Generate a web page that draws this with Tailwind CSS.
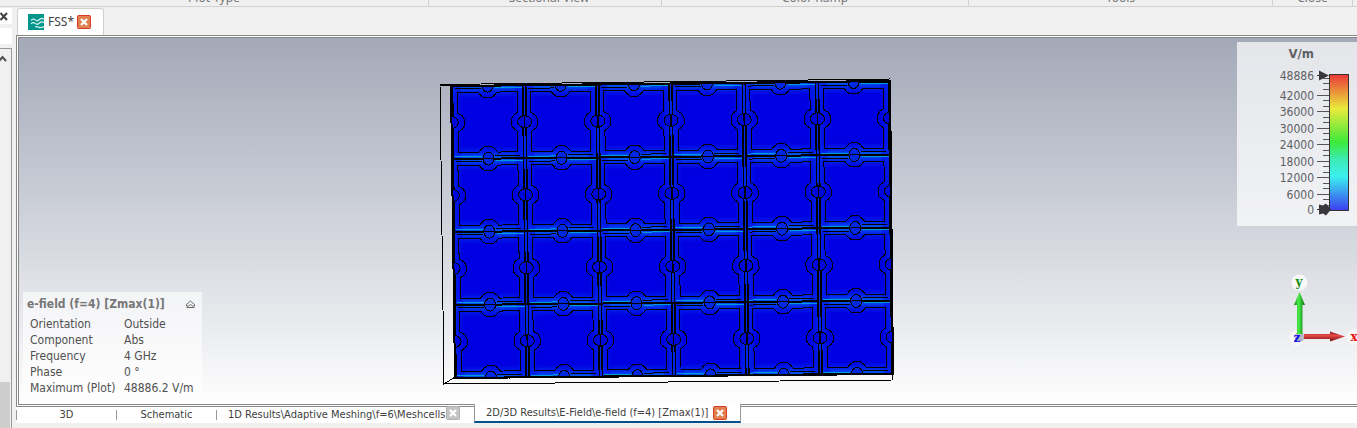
<!DOCTYPE html>
<html lang="en">
<head>
  <meta charset="UTF-8" />
  <meta name="viewport" content="width=device-width, initial-scale=1.0"/>
  <title>FSS - e-field</title>
  <script src="https://cdn.jsdelivr.net/npm/@tailwindcss/browser@4"></script>
</head>
<body class="h-screen overflow-hidden flex flex-col bg-[#f0f0f0] text-[#404040] font-['DejaVu_Sans_Condensed','Noto_Sans',sans-serif]">

  <!-- ribbon group captions -->
  <header class="h-[7px] shrink-0 relative overflow-hidden border-b border-[#d0d0d0] text-[12px] leading-[16px] text-[#777] font-['Noto_Sans',sans-serif]">
    <div class="absolute bottom-0 inset-x-0 flex text-center whitespace-nowrap">
      <span class="w-[429px] border-r border-[#d0d0d0]">Plot Type</span>
      <span class="w-[233px] pl-2 border-r border-[#d0d0d0]">Sectional View</span>
      <span class="w-[307px] border-r border-[#d0d0d0]">Color Ramp</span>
      <span class="w-[304px] border-r border-[#d0d0d0]">Tools</span>
      <span class="flex-1 mr-1 border-r border-[#d0d0d0]">Close</span>
    </div>
  </header>

  <div class="flex flex-1 min-h-0">
    <!-- docked pane on the left -->
    <aside class="w-3 mr-1 shrink-0 flex flex-col">
      <button aria-label="Close pane" class="mt-px h-4 bg-white">
        <svg class="w-3 h-4" viewBox="0 0 12 16"><path d="M0.500 5l6.500 7M7 5L0.500 12" stroke="#404040" stroke-width="2" fill="none"/></svg>
      </button>
      <div class="mt-1 h-4 bg-white"></div>
      <div class="mt-1 flex-1 flex flex-col justify-between border-t border-r border-[#999]">
        <svg class="w-[11px] h-4" viewBox="0 0 11 16"><path d="M-1 12l3.500-4 3.500 4" stroke="#505050" stroke-width="2" fill="none"/></svg>
        <div class="w-[10px] h-[46px] bg-[#cdcdcd]"></div>
      </div>
    </aside>

    <main class="flex-1 min-w-0 flex flex-col">
      <!-- document tab -->
      <div class="h-7 pt-px flex">
        <div class="h-[27px] pl-[10px] pr-3 ml-px flex items-center bg-white border border-b-0 border-[#d0d0d0] rounded-t-[3px] font-['Noto_Sans',sans-serif]">
          <svg class="w-4 h-4 mr-1" viewBox="0 0 16 16">
            <rect width="16" height="16" fill="#00968c"/>
            <path d="M3 6.500q2-2.500 4.200-.6t4.300-.4 4.500-.2M3 10q2-2.500 4.200-.6t4.300-.4 4.500-.2M7 13q1.500-1 3.500.1t5.500-.6" stroke="#d8f2f0" stroke-width="1.200" fill="none"/>
          </svg>
          <span class="text-[12px] leading-4 mr-[3px]">FSS*</span>
          <button aria-label="Close FSS">
            <svg class="w-[14px] h-[14px] block" viewBox="0 0 14 14"><rect x=".5" y=".5" width="13" height="13" rx="1" fill="#e08050" stroke="#d93a22"/><path d="M4 4l6 6M10 4l-6 6" stroke="#fff" stroke-width="2.200"/></svg>
          </button>
        </div>
      </div>

      <!-- 3D view -->
      <section class="h-[372px] shrink-0 border border-r-0 border-[#888] bg-white pl-px py-px">
        <div class="relative h-full border border-r-0 border-[#888] bg-linear-to-b from-[#a3a9b8] to-[#fefefe] overflow-hidden">
          <svg class="absolute left-[419px] top-[38px]" width="458" height="310" viewBox="438 76 458 310" shape-rendering="crispEdges">
            <defs>
              <linearGradient id="edgeV" x1="0" y1="0" x2="0" y2="1">
                <stop offset="0" stop-color="#0060f0"/><stop offset=".08" stop-color="#0020e8"/><stop offset=".17" stop-color="#0000e2"/>
                <stop offset=".83" stop-color="#0000e2"/><stop offset=".92" stop-color="#0020e8"/><stop offset="1" stop-color="#0060f0"/>
              </linearGradient>
              <linearGradient id="edgeH">
                <stop offset="0" stop-color="#0028e8"/><stop offset=".11" stop-color="#0010e4" stop-opacity=".6"/><stop offset=".15" stop-color="#0000e2" stop-opacity="0"/>
                <stop offset=".85" stop-color="#0000e2" stop-opacity="0"/><stop offset=".89" stop-color="#0010e4" stop-opacity=".6"/><stop offset="1" stop-color="#0028e8"/>
              </linearGradient>
              <clipPath id="plate"><rect width="439" height="292"/></clipPath>
              <g id="cell">
                <rect width="73.200" height="73" fill="url(#edgeV)"/>
                <rect width="73.200" height="73" fill="url(#edgeH)"/>
                <path d="M6 6.500H27L30 10L33 12H40L43 10L46 6.500H66V27L62 30L60 34V40L62 43L66 46V66.500H46L43 63L40 61H33L30 63L27 66.500H7V46L11 43L13 40V34L11 30L6 27Z" fill="none" stroke="#000"/>
              </g>
              <g id="joints">
                <path d="M-1.500 0V73M1.500 0V73" stroke="#000" stroke-width="1.600"/>
                <path d="M0 0H73" stroke="#000" stroke-width="2"/>
                <path d="M3 -2H30M44 2H71" stroke="#0098e0"/>
                <path d="M4 3H30M43 -3H68" stroke="#000"/>
                <ellipse cx="36.500" cy="0" rx="5.500" ry="6.500" fill="#0028e0" stroke="#000"/>
                <path d="M31 0H42" stroke="#000"/>
                <ellipse cx="0" cy="36.500" rx="7" ry="6" fill="#0008dc" stroke="#000"/>
                <path d="M0 30V43" stroke="#000" stroke-width="1.500"/>
              </g>
              <g id="cells">
                <use href="#cell"/><use href="#cell" x="73.200"/><use href="#cell" x="146.400"/>
                <use href="#cell" x="219.600"/><use href="#cell" x="292.800"/><use href="#cell" x="366"/>
              </g>
              <g id="jointRow">
                <use href="#joints"/><use href="#joints" x="73.200"/><use href="#joints" x="146.400"/>
                <use href="#joints" x="219.600"/><use href="#joints" x="292.800"/><use href="#joints" x="366"/><use href="#joints" x="439"/>
              </g>
            </defs>
            <!-- bounding box, back part -->
            <path d="M440 85L444 384L893 380M444 384L455 377M440 85L452 86" fill="none" stroke="#000"/>
            <g transform="matrix(1 -0.010 0.012 1 451 86)" clip-path="url(#plate)">
              <use href="#cells"/><use href="#cells" y="73"/><use href="#cells" y="146"/><use href="#cells" y="219"/>
              <use href="#jointRow"/><use href="#jointRow" y="73"/><use href="#jointRow" y="146"/><use href="#jointRow" y="219"/><use href="#jointRow" y="292"/>
            </g>
            <path d="M451 86L890 81L893 374L455 378Z" fill="none" stroke="#000" stroke-width="2"/>
            <path d="M440 84.500L890 79L893 380" fill="none" stroke="#000"/>
          </svg>

          <!-- result info -->
          <div class="absolute left-1 bottom-2 w-[179px] h-[104px] pl-1 pt-1 bg-white/60">
            <div class="flex items-center justify-between pr-[6px] text-[#777]">
              <h2 class="text-[12px] leading-4 font-bold whitespace-nowrap">e-field (f=4) [Zmax(1)]</h2>
              <button aria-label="Collapse">
                <svg class="w-[11px] h-4 block" viewBox="0 0 11 16"><path d="M1.500 8.500L5.500 5l4 3.500v1.500h-2L5.500 8.500 3.500 10h-2zM1.500 11.500h8" stroke="#666" fill="none"/></svg>
              </button>
            </div>
            <table class="mt-1 ml-[3px] text-[12px] leading-4 text-[#505050] whitespace-nowrap">
              <tr><td class="w-[94px]">Orientation</td><td>Outside</td></tr>
              <tr><td>Component</td><td>Abs</td></tr>
              <tr><td>Frequency</td><td>4 GHz</td></tr>
              <tr><td>Phase</td><td>0 °</td></tr>
              <tr><td>Maximum (Plot)</td><td>48886.2 V/m</td></tr>
            </table>
          </div>

          <!-- color legend -->
          <div class="absolute right-0 top-1 w-[120px] h-[184px] bg-white/70">
            <svg class="block" width="120" height="184" viewBox="0 0 120 184">
              <defs>
                <linearGradient id="ramp" x1="0" y1="0" x2="0" y2="1">
                  <stop offset="0" stop-color="#ea3838"/><stop offset=".25" stop-color="#eaea3c"/><stop offset=".5" stop-color="#3cea3c"/>
                  <stop offset=".63" stop-color="#3ceab8"/><stop offset=".75" stop-color="#3cf0f0"/><stop offset="1" stop-color="#3c3cf0"/>
                </linearGradient>
              </defs>
              <g shape-rendering="crispEdges" stroke="#555">
                <path d="M80 53.500h12M80 69.500h12M80 86.500h12M80 102.500h12M80 119.500h12M80 135.500h12M80 152.500h12"/>
                <path d="M86 36.500h6M86 41.500h6M86 47.500h6M86 58.500h6M86 64.500h6M86 75.500h6M86 80.500h6M86 91.500h6M86 97.500h6M86 108.500h6M86 113.500h6M86 124.500h6M86 130.500h6M86 141.500h6M86 146.500h6M86 157.500h6M86 163.500h6"/>
                <rect x="92.500" y="32.500" width="19" height="136" fill="url(#ramp)" stroke="#333"/>
              </g>
              <path d="M80 33.500h4M80 167.500h4" stroke="#333"/>
              <path d="M82 28.500l10 5-10 5zM82 162.500l4 1 3-2 5 6-5 6-3-2-4 1z" fill="#38383c"/>
              <g fill="#606064" font-size="12" text-anchor="end">
                <text x="77" y="16" font-size="13" font-weight="bold">V/m</text>
                <text x="77" y="38">48886</text><text x="77" y="58">42000</text><text x="77" y="74">36000</text>
                <text x="77" y="91">30000</text><text x="77" y="107">24000</text><text x="77" y="124">18000</text>
                <text x="77" y="140">12000</text><text x="77" y="157">6000</text><text x="77" y="172">0</text>
              </g>
            </svg>
          </div>

          <!-- axis triad -->
          <svg class="absolute right-0 bottom-[55px]" width="70" height="76" viewBox="1287 273 70 76">
            <defs>
              <linearGradient id="gy"><stop offset="0" stop-color="#158015"/><stop offset=".4" stop-color="#48f048"/><stop offset="1" stop-color="#107010"/></linearGradient>
              <linearGradient id="rx" x1="0" y1="0" x2="0" y2="1"><stop offset="0" stop-color="#801818"/><stop offset=".4" stop-color="#e84848"/><stop offset="1" stop-color="#701010"/></linearGradient>
            </defs>
            <g fill="#f8f8f8"><circle cx="1299.500" cy="282.500" r="8"/><circle cx="1297" cy="338" r="7.500"/><circle cx="1354" cy="337" r="7.500"/></g>
            <circle cx="1299.500" cy="337" r="5" fill="#b8b8c8"/>
            <path d="M1297 334V305h-3l5.500-13 5.500 13h-2.500v29z" fill="url(#gy)"/>
            <path d="M1304 334h26v-2.500l15 5-15 5V339h-26z" fill="url(#rx)"/>
            <g font-family="DejaVu Serif, serif" font-size="12" font-weight="bold" text-anchor="middle">
              <text x="1299" y="286" fill="#109010">y</text>
              <text x="1297" y="342" fill="#1010e8">z</text>
              <text x="1354" y="341" fill="#e81010">x</text>
            </g>
          </svg>
        </div>
      </section>

      <!-- view tabs -->
      <nav class="h-4 shrink-0 bg-white flex items-center text-[11px] leading-4 whitespace-nowrap">
        <a href="#" class="w-[100px] h-[10px] flex items-center justify-center border-l border-[#999]">3D</a>
        <a href="#" class="w-[100px] h-[10px] flex items-center justify-center border-l border-[#999]">Schematic</a>
        <div class="w-[258px] h-[10px] pl-[11px] pr-[14px] flex items-center justify-between border-l border-[#999]">
          <a href="#">1D Results\Adaptive Meshing\f=6\Meshcells</a>
          <button aria-label="Close Meshcells" class="-mt-1">
            <svg class="w-[14px] h-[14px] block" viewBox="0 0 14 14"><rect x=".5" y=".5" width="13" height="13" rx="1" fill="#c4c4c4" stroke="#b0b0b0"/><path d="M4 4l6 6M10 4l-6 6" stroke="#fff" stroke-width="2.200"/></svg>
          </button>
        </div>
        <div class="relative -mt-[3px] w-[267px] h-[19px] pl-[11px] pr-[13px] flex items-center justify-between bg-white border border-t-0 border-b-2 border-[#999] border-b-[#00508c]">
          <a href="#">2D/3D Results\E-Field\e-field (f=4) [Zmax(1)]</a>
          <button aria-label="Close e-field">
            <svg class="w-[14px] h-[14px] block" viewBox="0 0 14 14"><rect x=".5" y=".5" width="13" height="13" rx="1" fill="#e08050" stroke="#d93a22"/><path d="M4 4l6 6M10 4l-6 6" stroke="#fff" stroke-width="2.200"/></svg>
          </button>
        </div>
      </nav>
    </main>
  </div>
</body>
</html>
